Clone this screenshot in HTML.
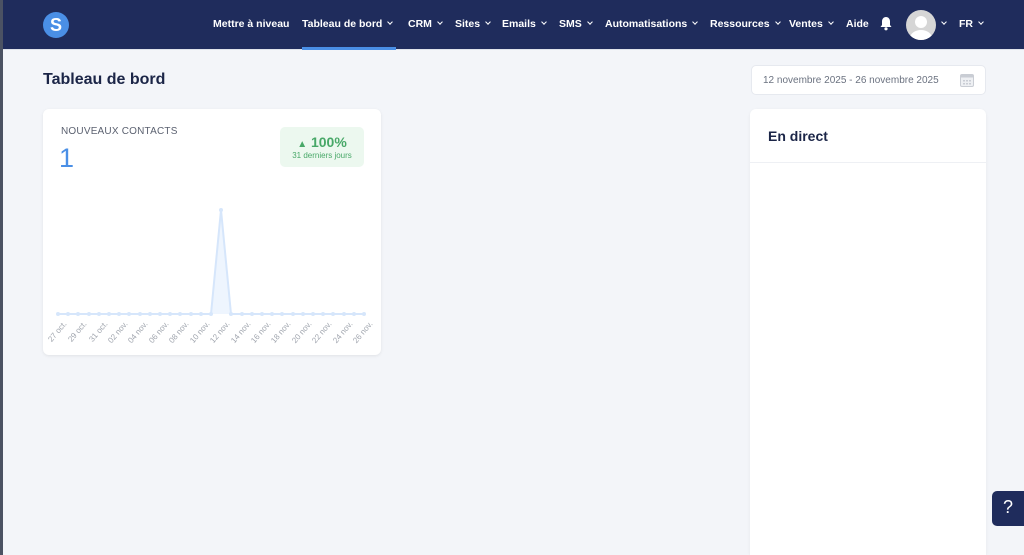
<!DOCTYPE html>
<html><head><meta charset="utf-8"><style>
*{margin:0;padding:0;box-sizing:border-box}
html,body{width:1024px;height:555px;overflow:hidden}
body{background:#f3f5f9;font-family:"Liberation Sans",sans-serif;position:relative}
.strip{position:absolute;left:0;top:0;width:3px;height:555px;background:#4b5263;z-index:5}
.nav{position:absolute;left:0;top:0;width:1024px;height:50px;background:#1f2c5c;border-bottom:1px solid #dfe3ea}
.logo{position:absolute;left:43px;top:12px;width:26px;height:26px;border-radius:50%;background:#4a8fe6;color:#fff;font-weight:bold;font-size:18px;text-align:center;line-height:26px}
.nav span{position:absolute;top:18px;color:#fff;font-weight:bold;font-size:10.5px;white-space:nowrap}
.chev{display:inline-block;width:4px;height:4px;border-right:1px solid #fff;border-bottom:1px solid #fff;transform:rotate(45deg);margin-left:6px;position:relative;top:-3px}
.active{position:absolute;left:302px;top:47px;width:94px;height:3px;background:#4a8fe6}
.avatar{position:absolute;left:906px;top:10px;width:30px;height:30px;border-radius:50%;background:#d6d6d6;overflow:hidden}
h1{position:absolute;left:43px;top:71px;font-size:16px;color:#1b2547;font-weight:bold}
.date{position:absolute;left:751px;top:65px;width:235px;height:30px;background:#fff;border:1px solid #e6e9ef;border-radius:5px;font-size:10px;color:#6b7280;padding:9px 0 0 11px}
.card{position:absolute;left:43px;top:109px;width:338px;height:246px;background:#fff;border-radius:6px;box-shadow:0 1px 3px rgba(0,0,0,.08)}
.live{position:absolute;left:750px;top:109px;width:236px;height:446px;background:#fff;border-radius:6px 6px 0 0;box-shadow:0 1px 3px rgba(0,0,0,.06)}
.live b{position:absolute;left:18px;top:19px;font-size:14px;color:#1b2547}
.live i{position:absolute;left:0;top:53px;width:236px;height:1px;background:#eef0f4}
.help{position:absolute;left:992px;top:491px;width:40px;height:35px;background:#1f2c5c;border-radius:5px;color:#fff;font-size:18px;padding:6px 0 0 11px}
</style></head><body>
<div class="strip"></div>
<div class="nav">
<div class="logo">S</div>
<span style="left:213px">Mettre à niveau</span>
<span style="left:302px">Tableau de bord<i class="chev"></i></span>
<span style="left:408px">CRM<i class="chev"></i></span>
<span style="left:455px">Sites<i class="chev"></i></span>
<span style="left:502px">Emails<i class="chev"></i></span>
<span style="left:559px">SMS<i class="chev"></i></span>
<span style="left:605px">Automatisations<i class="chev"></i></span>
<span style="left:710px">Ressources<i class="chev"></i></span>
<span style="left:789px">Ventes<i class="chev"></i></span>
<span style="left:846px">Aide</span>
<svg style="position:absolute;left:879px;top:16px" width="14" height="15" viewBox="0 0 14 15"><path d="M7 1C4.5 1 3 3 3 5.5V9L1.5 11H12.5L11 9V5.5C11 3 9.5 1 7 1Z" fill="#fff"/><circle cx="7" cy="12.8" r="1.6" fill="#fff"/></svg>
<div class="avatar"><div style="position:absolute;left:9px;top:6px;width:12px;height:12px;border-radius:50%;background:#fff"></div><div style="position:absolute;left:4px;top:20px;width:22px;height:16px;border-radius:50%;background:#fff"></div></div>
<span style="left:936px"><i class="chev"></i></span>
<span style="left:959px">FR<i class="chev"></i></span>
<div class="active"></div>
</div>
<h1>Tableau de bord</h1>
<div class="date">12 novembre 2025 - 26 novembre 2025
<svg style="position:absolute;left:208px;top:7px" width="14" height="14" viewBox="0 0 14 14"><rect x="0.5" y="1.5" width="13" height="12" rx="1.5" fill="#eef0f3" stroke="#c9cdd4"/><rect x="0.5" y="1.5" width="13" height="3" fill="#c9cdd4"/><g fill="#c9cdd4"><rect x="3" y="7" width="2" height="1.5"/><rect x="6" y="7" width="2" height="1.5"/><rect x="9" y="7" width="2" height="1.5"/><rect x="3" y="10" width="2" height="1.5"/><rect x="6" y="10" width="2" height="1.5"/><rect x="9" y="10" width="2" height="1.5"/></g></svg></div>
<div class="card">
<div style="position:absolute;left:18px;top:17px;font-size:10px;color:#5b6170;letter-spacing:.2px">NOUVEAUX CONTACTS</div>
<div style="position:absolute;left:16px;top:34px;font-size:27px;color:#4a8fe6">1</div>
<div style="position:absolute;left:237px;top:18px;width:84px;height:40px;background:#ecf8ef;border-radius:5px;text-align:center;color:#48a868">
<div style="font-size:14px;font-weight:bold;margin-top:7px"><span style="font-size:10px">▲</span> 100%</div>
<div style="font-size:8px;margin-top:1px">31 derniers jours</div></div>
<svg style="position:absolute;left:0;top:0" width="338" height="246">
<path d="M15 205 L168 205 L178 101 L188 205 L321 205 Z" fill="#eef5fe"/>
<polyline points="15,205 168,205 178,101 188,205 321,205" fill="none" stroke="#d6e6fb" stroke-width="2"/>
<g fill="#d6e6fb">
<circle cx="15" cy="205" r="2"/><circle cx="25" cy="205" r="2"/><circle cx="35" cy="205" r="2"/><circle cx="46" cy="205" r="2"/><circle cx="56" cy="205" r="2"/><circle cx="66" cy="205" r="2"/><circle cx="76" cy="205" r="2"/><circle cx="86" cy="205" r="2"/><circle cx="97" cy="205" r="2"/><circle cx="107" cy="205" r="2"/><circle cx="117" cy="205" r="2"/><circle cx="127" cy="205" r="2"/><circle cx="137" cy="205" r="2"/><circle cx="148" cy="205" r="2"/><circle cx="158" cy="205" r="2"/><circle cx="168" cy="205" r="2"/><circle cx="178" cy="101" r="2"/><circle cx="188" cy="205" r="2"/><circle cx="199" cy="205" r="2"/><circle cx="209" cy="205" r="2"/><circle cx="219" cy="205" r="2"/><circle cx="229" cy="205" r="2"/><circle cx="239" cy="205" r="2"/><circle cx="250" cy="205" r="2"/><circle cx="260" cy="205" r="2"/><circle cx="270" cy="205" r="2"/><circle cx="280" cy="205" r="2"/><circle cx="290" cy="205" r="2"/><circle cx="301" cy="205" r="2"/><circle cx="311" cy="205" r="2"/><circle cx="321" cy="205" r="2"/>
</g>
<g font-size="8" fill="#a0a5ae" font-family="Liberation Sans">
<text transform="translate(24,215) rotate(-50)" text-anchor="end">27 oct.</text>
<text transform="translate(44,215) rotate(-50)" text-anchor="end">29 oct.</text>
<text transform="translate(65,215) rotate(-50)" text-anchor="end">31 oct.</text>
<text transform="translate(85,215) rotate(-50)" text-anchor="end">02 nov.</text>
<text transform="translate(105,215) rotate(-50)" text-anchor="end">04 nov.</text>
<text transform="translate(126,215) rotate(-50)" text-anchor="end">06 nov.</text>
<text transform="translate(146,215) rotate(-50)" text-anchor="end">08 nov.</text>
<text transform="translate(167,215) rotate(-50)" text-anchor="end">10 nov.</text>
<text transform="translate(187,215) rotate(-50)" text-anchor="end">12 nov.</text>
<text transform="translate(208,215) rotate(-50)" text-anchor="end">14 nov.</text>
<text transform="translate(228,215) rotate(-50)" text-anchor="end">16 nov.</text>
<text transform="translate(248,215) rotate(-50)" text-anchor="end">18 nov.</text>
<text transform="translate(269,215) rotate(-50)" text-anchor="end">20 nov.</text>
<text transform="translate(289,215) rotate(-50)" text-anchor="end">22 nov.</text>
<text transform="translate(310,215) rotate(-50)" text-anchor="end">24 nov.</text>
<text transform="translate(330,215) rotate(-50)" text-anchor="end">26 nov.</text>
</g></svg>
</div>
<div class="live"><b>En direct</b><i></i></div>
<div class="help">?</div>
</body></html>
